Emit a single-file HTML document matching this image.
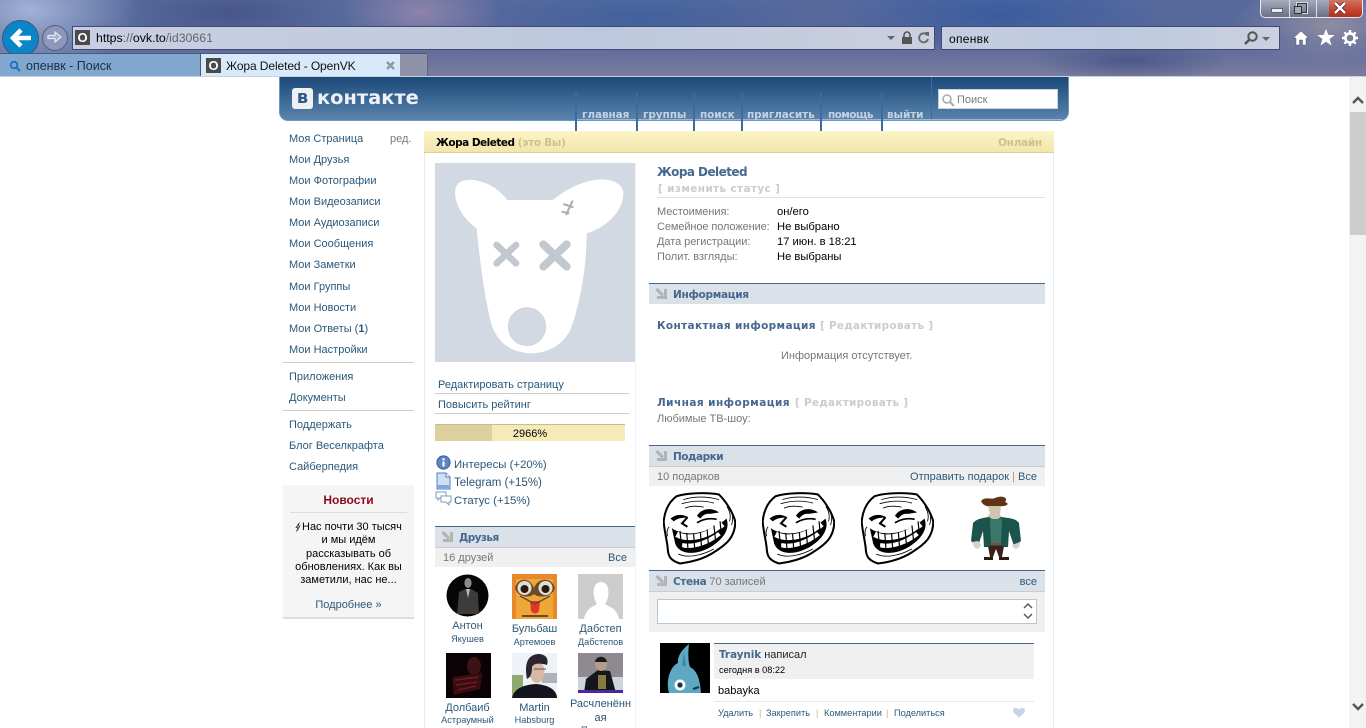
<!DOCTYPE html>
<html><head><meta charset="utf-8"><title>Жора Deleted - OpenVK</title>
<style>
html,body{margin:0;padding:0;width:1366px;height:728px;overflow:hidden;background:#fff}
body{position:relative;font:11px/14px "Liberation Sans",sans-serif;color:#2b587a}
div,span.t,svg{position:absolute}
.t{position:absolute;white-space:nowrap;line-height:14px;margin-top:1px}
.b{font-family:"DejaVu Sans",sans-serif;font-weight:bold;font-size:10.5px;color:#45688e}
.g{color:#777}.k{color:#000}.c{text-align:center}
.gr{font-family:"DejaVu Sans",sans-serif;font-weight:bold;font-size:10.5px;color:#ccc}
.hd{left:649px;width:396px;height:20px;background:#dae1e8;border-top:1px solid #45688e}
.sub{background:#f0f0f0}
.ln{height:1px;background:#ccc}
.sm{font-size:9.2px}
.nm{font-size:11px}
.nv{top:93px;width:2px;height:40px;background:#3d6a9f}
.nt{top:107px;font-family:"DejaVu Sans",sans-serif;font-weight:bold;font-size:10.5px;color:#c3d2e3;letter-spacing:-.1px}
</style></head><body>

<!-- browser chrome -->
<div style="left:0;top:0;width:1366px;height:76px;overflow:hidden;background:#56689a">
 <div style="left:0;top:0;width:1366px;height:76px;background:
  radial-gradient(ellipse 110px 60px at 30px 10px,#a2b2d6 0,rgba(162,178,214,0) 100%),
  radial-gradient(ellipse 110px 30px at 230px 12px,#47568a 0,rgba(71,86,138,0) 100%),
  radial-gradient(ellipse 80px 40px at 420px 12px,#8d84ab 0,rgba(141,132,171,0) 100%),
  radial-gradient(ellipse 160px 30px at 640px 18px,#42619d 0,rgba(66,97,157,0) 100%),
  radial-gradient(ellipse 160px 40px at 1000px 15px,#3b5c9e 0,rgba(59,92,158,0) 100%),
  radial-gradient(ellipse 100px 20px at 1130px 60px,#4b5988 0,rgba(75,89,136,0) 100%),
  radial-gradient(ellipse 100px 40px at 1330px 25px,#8f8ca2 0,rgba(143,140,162,0) 100%),
  linear-gradient(#566a9e 0,#56669a 50%,#7a7c9f 100%)"></div>
</div>
<div style="left:0;top:76px;width:1366px;height:1px;background:#c9cfdc"></div>

<!-- window buttons -->
<div style="left:1260px;top:-2px;width:101px;height:18px;border:1px solid #e8e8ee;border-radius:0 0 5px 5px;overflow:hidden;background:linear-gradient(#a8adbe,#6a7088)">
 <div style="left:68px;top:0;width:33px;height:19px;background:linear-gradient(#d07a6a 0,#c84530 55%,#a83020 100%)"></div>
 <div style="left:28px;top:0;width:1px;height:19px;background:#e0e0e8"></div>
 <div style="left:55px;top:0;width:1px;height:19px;background:#e0e0e8"></div>
</div>
<div style="left:1271px;top:8px;width:10px;height:3px;background:#eee;border:1px solid #666"></div>
<div style="left:1297px;top:3px;width:8px;height:8px;border:1px solid #333;box-shadow:0 0 0 1px #ddd"></div>
<div style="left:1294px;top:6px;width:6px;height:6px;border:1px solid #333;background:#a8adbd"></div>
<svg style="left:1332px;top:2px" width="16" height="12" viewBox="0 0 16 12"><path d="M3 1L13 11M13 1L3 11" stroke="#4a2a2a" stroke-width="4"/><path d="M3 1L13 11M13 1L3 11" stroke="#fff" stroke-width="2.4"/></svg>

<!-- nav buttons -->
<div style="left:2px;top:20px;width:35px;height:35px;border-radius:50%;background:#0a86c8;border:1px solid #3b5578"></div>
<svg style="left:8px;top:25px" width="26" height="26" viewBox="0 0 26 26"><path d="M23 13H5M13 5L5 13L13 21" fill="none" stroke="#fff" stroke-width="4.5"/></svg>
<div style="left:42px;top:25px;width:24px;height:24px;border-radius:50%;background:#8c97bb;border:1px solid #54607f"></div>
<svg style="left:46px;top:29px" width="17" height="16" viewBox="0 0 17 16"><path d="M2 6.5H9V3L15 8L9 13V9.5H2Z" fill="#a6afc9" stroke="#e6e9f2" stroke-width="1.2"/></svg>

<!-- address -->
<div style="left:72px;top:26px;width:861px;height:22px;border:1px solid #3f4c72;background:linear-gradient(90deg,#c9cfe2,#c3cbdf 40%,#bcc8de 60%,#cbcfdf)"></div>
<div style="left:75px;top:30px;width:15px;height:15px;background:#4a4a4a"></div>
<span class="t" style="margin-top:0;left:75px;top:30px;width:15px;text-align:center;font-weight:bold;font-size:13px;line-height:15px;color:#fff">O</span>
<span class="t" style="margin-top:0;left:96px;top:31px;font-size:12.3px;color:#000">https<span style="color:#666">://</span>ovk.to<span style="color:#666">/id30661</span></span>
<div style="left:887px;top:36px;border:4px solid transparent;border-top:4px solid #666;width:0;height:0"></div>
<svg style="left:901px;top:31px" width="12" height="14" viewBox="0 0 12 14"><path d="M3 6V4a3 3 0 0 1 6 0v2" fill="none" stroke="#555" stroke-width="1.6"/><rect x="1" y="6" width="10" height="7" fill="#555"/></svg>
<svg style="left:917px;top:31px" width="13" height="14" viewBox="0 0 13 14"><path d="M10.5 4.5A4.5 4.5 0 1 0 11 8" fill="none" stroke="#666" stroke-width="1.8"/><path d="M8 1H12V5.5Z" fill="#666"/></svg>

<!-- search -->
<div style="left:941px;top:26px;width:337px;height:22px;border:1px solid #3f4c72;background:linear-gradient(90deg,#c6cde0,#bcc9df 50%,#ccd0e0)"></div>
<span class="t" style="margin-top:0;left:949px;top:32px;font-size:12px;letter-spacing:.3px;color:#000">опенвк</span>
<svg style="left:1243px;top:30px" width="16" height="16" viewBox="0 0 16 16"><circle cx="9.5" cy="6.5" r="4.2" fill="none" stroke="#555" stroke-width="2"/><path d="M6 10L2 14" stroke="#555" stroke-width="2.6"/></svg>
<div style="left:1262px;top:37px;border:4px solid transparent;border-top:4px solid #666;width:0;height:0"></div>

<!-- right icons -->
<svg style="left:1293px;top:30px" width="16" height="16" viewBox="0 0 16 16"><path d="M8 1L15.5 8H13V15H9.5V10H6.5V15H3V8H.5Z" fill="#fff" stroke="#444" stroke-width=".4"/></svg>
<svg style="left:1317px;top:29px" width="18" height="17" viewBox="0 0 18 17"><path d="M9 0L11.4 6H17.6L12.6 10L14.5 16.5L9 12.8L3.5 16.5L5.4 10L.4 6H6.6Z" fill="#fff"/></svg>
<svg style="left:1342px;top:30px" width="16" height="16" viewBox="0 0 16 16"><circle cx="8" cy="8" r="4.6" fill="none" stroke="#fff" stroke-width="2.6"/><path d="M8 0V3M8 13V16M0 8H3M13 8H16M2.3 2.3L4.5 4.5M11.5 11.5L13.7 13.7M13.7 2.3L11.5 4.5M4.5 11.5L2.3 13.7" stroke="#fff" stroke-width="2.4"/></svg>

<!-- tabs -->
<div style="left:0;top:53px;width:427px;height:1px;background:#4a5a7c"></div>
<div style="left:0;top:54px;width:200px;height:22px;background:#82a7ce"></div>
<div style="left:200px;top:54px;width:1px;height:22px;background:#46597a"></div>
<div style="left:201px;top:54px;width:199px;height:22px;background:#d8e9f9"></div>
<div style="left:400px;top:54px;width:27px;height:22px;background:#8f93a8;border-right:1px solid #5a6480"></div>
<svg style="left:9px;top:60px" width="12" height="12" viewBox="0 0 12 12"><circle cx="5" cy="5" r="3.3" fill="none" stroke="#1a6fc0" stroke-width="1.8"/><path d="M7.5 7.5L11 11" stroke="#1a6fc0" stroke-width="2"/></svg>
<span class="t" style="left:26px;top:58px;font-size:12.5px;color:#1c2e48">опенвк - Поиск</span>
<div style="left:206px;top:58px;width:15px;height:15px;background:#4a4a4a"></div>
<span class="t" style="margin-top:0;left:206px;top:58px;width:15px;text-align:center;font-weight:bold;font-size:13px;line-height:15px;color:#fff">O</span>
<span class="t" style="left:226px;top:58px;font-size:12px;letter-spacing:-.1px;color:#111">Жора Deleted - OpenVK</span>
<svg style="left:385px;top:60px" width="11" height="11" viewBox="0 0 11 11"><path d="M2 2L9 9M9 2L2 9" stroke="#8d98a8" stroke-width="2.4"/></svg>

<!-- vk header -->
<div style="left:279px;top:77px;width:790px;height:44px;box-sizing:border-box;border:1px solid #6f94ba;border-top:0;border-radius:0 0 9px 9px;background:linear-gradient(#1a4878,#5a84ad)"></div>
<div style="left:292px;top:88px;width:21px;height:21px;border-radius:3px;background:#eef0f2"></div>
<span class="t" style="margin-top:0;left:292px;top:88px;width:21px;text-align:center;font:bold 18px/20px 'DejaVu Sans',sans-serif;color:#2f5b8a">в</span>
<span class="t" style="margin-top:0;left:317px;top:87px;font:bold 19.4px/22px 'DejaVu Sans',sans-serif;color:#eef2f6">контакте</span>
<div style="left:576px;top:119px;width:486px;height:1px;background:#9fb6cf"></div>
<div class="nv" style="left:575px"></div><div class="nv" style="left:636px"></div><div class="nv" style="left:693px"></div><div class="nv" style="left:741px"></div><div class="nv" style="left:820px"></div><div class="nv" style="left:881px"></div>
<div style="left:931px;top:77px;width:1px;height:42px;background:#3f6a98"></div>
<span class="t nt" style="left:582px">главная</span>
<span class="t nt" style="left:643px">группы</span>
<span class="t nt" style="left:700px">поиск</span>
<span class="t nt" style="left:747px">пригласить</span>
<span class="t nt" style="left:828px;letter-spacing:-.6px">помощь</span>
<span class="t nt" style="left:887px">выйти</span>
<div style="left:938px;top:89px;width:120px;height:20px;background:#fff;border:0;box-shadow:inset 0 0 0 1px #c4d2e0"></div>
<svg style="left:941px;top:93px" width="14" height="14" viewBox="0 0 14 14"><circle cx="6" cy="6" r="4" fill="none" stroke="#aaa" stroke-width="1.6"/><path d="M9 9L13 13" stroke="#aaa" stroke-width="2"/></svg>
<span class="t g" style="left:957px;top:92px">Поиск</span>

<!-- sidebar -->
<span class="t" style="left:289px;top:131px">Моя Страница</span><span class="t g" style="left:390px;top:131px">ред.</span>
<span class="t" style="left:289px;top:152px">Мои Друзья</span>
<span class="t" style="left:289px;top:173px">Мои Фотографии</span>
<span class="t" style="left:289px;top:194px">Мои Видеозаписи</span>
<span class="t" style="left:289px;top:215px">Мои Аудиозаписи</span>
<span class="t" style="left:289px;top:236px">Мои Сообщения</span>
<span class="t" style="left:289px;top:257px">Мои Заметки</span>
<span class="t" style="left:289px;top:279px">Мои Группы</span>
<span class="t" style="left:289px;top:300px">Мои Новости</span>
<span class="t" style="left:289px;top:321px">Мои Ответы (<b>1</b>)</span>
<span class="t" style="left:289px;top:342px">Мои Настройки</span>
<div class="ln" style="left:283px;top:362px;width:131px"></div>
<span class="t" style="left:289px;top:369px">Приложения</span>
<span class="t" style="left:289px;top:390px">Документы</span>
<div class="ln" style="left:283px;top:410px;width:131px"></div>
<span class="t" style="left:289px;top:417px">Поддержать</span>
<span class="t" style="left:289px;top:438px">Блог Веселкрафта</span>
<span class="t" style="left:289px;top:459px">Сайберпедия</span>

<div style="left:283px;top:485px;width:131px;height:134px;box-sizing:border-box;background:#f5f5f5;border-bottom:2px solid #ddd"></div>
<span class="t c" style="left:283px;width:131px;top:492px;font-weight:bold;font-size:12px;color:#8b0a1a">Новости</span>
<div class="ln" style="left:290px;top:512px;width:117px;background:#ddd"></div>
<svg style="left:295px;top:522px" width="6" height="10" viewBox="0 0 6 10"><path d="M4.5 .5L1 5.5H3L1.5 9.5L5 4H3Z" fill="none" stroke="#333" stroke-width=".7"/></svg>
<span class="t k" style="left:302px;top:519px">Нас почти 30 тысяч</span>
<span class="t c k" style="left:283px;width:131px;top:532px">и мы идём</span>
<span class="t c k" style="left:283px;width:131px;top:546px">рассказывать об</span>
<span class="t c k" style="left:283px;width:131px;top:559px">обновлениях. Как вы</span>
<span class="t c k" style="left:283px;width:131px;top:572px">заметили, нас не...</span>
<span class="t c" style="left:283px;width:131px;top:597px">Подробнее »</span>

<!-- content frame -->
<div style="left:424px;top:153px;width:1px;height:575px;background:#e6ebf1"></div>
<div style="left:1053px;top:153px;width:1px;height:575px;background:#e6ebf1"></div>
<div style="left:635px;top:163px;width:1px;height:565px;background:#eef1f5"></div>
<div style="left:424px;top:131px;width:630px;height:22px;box-sizing:border-box;background:linear-gradient(#fcf4c8,#f3e6ac);border-bottom:1px solid #dccf96"></div>
<span class="t" style="left:436px;top:135px;font:bold 10.5px/14px 'DejaVu Sans',sans-serif;color:#000;letter-spacing:-.5px">Жора Deleted <span style="color:#cfc28c;letter-spacing:-.3px">(это Вы)</span></span>
<span class="t" style="left:998px;top:135px;font:bold 10.5px/14px 'DejaVu Sans',sans-serif;color:#cfc28c;letter-spacing:-.3px">Онлайн</span>

<!-- avatar -->
<div style="left:435px;top:163px;width:200px;height:199px;background:#d2d9e2"></div>
<svg style="left:430px;top:130px" width="220" height="240" viewBox="0 0 660 720">
 <path d="M75 185C78 155 100 148 130 150C170 155 205 175 232 210H368C400 185 450 152 510 148C555 148 582 165 580 195C578 240 535 290 470 310C470 400 455 500 425 590C405 640 360 670 300 670C240 665 205 640 185 585C165 510 150 400 140 295C105 270 75 230 75 185Z" fill="#fff"/>
 <ellipse cx="291" cy="590" rx="56" ry="57" fill="#d2d9e2" stroke="#c6ccd4" stroke-width="2"/>
 <path d="M200 345L258 400M258 345L200 400" stroke="#c2c8d0" stroke-width="20" stroke-linecap="round"/>
 <path d="M340 343L410 410M410 343L340 410" stroke="#c2c8d0" stroke-width="24" stroke-linecap="round"/>
 <path d="M428 212L408 255M400 222L430 232M395 245L418 250" stroke="#a8acb2" stroke-width="6" fill="none"/>
</svg>

<span class="t" style="left:438px;top:377px">Редактировать страницу</span>
<div class="ln" style="left:435px;top:393px;width:194px"></div>
<span class="t" style="left:438px;top:397px">Повысить рейтинг</span>
<div class="ln" style="left:435px;top:413px;width:194px"></div>
<div style="left:435px;top:424px;width:190px;height:17px;background:#f6eab9"></div>
<div style="left:435px;top:424px;width:57px;height:17px;background:#ddd09c"></div>
<div style="left:435px;top:424px;width:190px;height:1px;background:#c9bd8a"></div>
<span class="t c k" style="left:435px;width:190px;top:426px">2966%</span>

<svg style="left:436px;top:455px" width="15" height="15" viewBox="0 0 15 15"><circle cx="7.5" cy="7.5" r="6.6" fill="#5f86bd" stroke="#2f5d9a"/><rect x="6.4" y="6.5" width="2.2" height="5" fill="#fff"/><rect x="6.4" y="3.3" width="2.2" height="2" fill="#fff"/></svg>
<span class="t" style="left:454px;top:457px;font-size:11.4px">Интересы (+20%)</span>
<svg style="left:436px;top:472px" width="15" height="18" viewBox="0 0 15 18"><path d="M1 1H10L14 5V17H1Z" fill="#cfe0f5" stroke="#4b7fbc"/><path d="M10 1V5H14" fill="#fff" stroke="#4b7fbc"/><rect x="2" y="13" width="11" height="3" fill="#7ba8de"/></svg>
<span class="t" style="left:454px;top:475px;font-size:11.5px">Telegram (+15%)</span>
<svg style="left:435px;top:491px" width="17" height="16" viewBox="0 0 17 16"><path d="M1 1H11V7H5L3 9V7H1Z" fill="#fff" stroke="#7d9cc4"/><path d="M6 5H16V11H14V14L11 11H6Z" fill="#fff" stroke="#7d9cc4"/></svg>
<span class="t" style="left:454px;top:493px;font-size:11.4px">Статус (+15%)</span>

<svg width="0" height="0" style="left:0;top:0"><defs>
<symbol id="ar" viewBox="0 0 13 12"><path d="M1.5 1L8 7.5" stroke="#b4b4b4" stroke-width="3.2"/><path d="M12 1V11H2V8H9V1Z" fill="#b4b4b4"/></symbol>
<symbol id="troll" viewBox="0 0 215 210">
 <path d="M40 10C70 0 130 -2 165 5C185 25 205 55 213 85C212 130 190 150 150 175C120 195 80 205 50 208C25 200 15 190 14 165C12 140 5 120 2 85C5 50 20 25 40 10Z" fill="#fff" stroke="#000" stroke-width="6"/>
 <path d="M26 104C60 130 130 125 187 76C198 105 180 135 140 160C100 183 50 185 36 150Z" fill="#000"/>
 <path d="M40 122C75 140 130 130 176 92" fill="none" stroke="#fff" stroke-width="17"/>
 <path d="M56 154C90 162 135 145 166 120" fill="none" stroke="#fff" stroke-width="13"/>
 <path d="M50 112L56 170M70 118L74 172M90 120L94 172M110 116L114 166M130 108L134 156M150 96L155 142M168 84L172 124" stroke="#000" stroke-width="3.5"/>
 <path d="M40 141C80 152 130 140 172 106" fill="none" stroke="#000" stroke-width="4"/>
 <path d="M22 76C35 64 55 60 75 72C65 74 45 72 32 84Z" fill="#000"/>
 <path d="M72 72L56 90L72 100" fill="none" stroke="#000" stroke-width="6"/>
 <path d="M100 68C112 45 145 42 165 58L138 62C125 60 115 68 110 76Z" fill="#000"/>
 <path d="M100 88C120 76 140 74 158 78" fill="none" stroke="#000" stroke-width="5"/>
 <path d="M18 100C12 108 10 118 14 128M196 45C206 60 208 75 202 95M188 40C198 55 200 70 196 84M60 20C90 10 130 10 165 20M55 32C90 22 120 22 150 30M65 45C80 38 100 38 120 42" fill="none" stroke="#000" stroke-width="2.5"/>
 <path d="M45 180C70 192 110 187 150 165" fill="none" stroke="#000" stroke-width="2.5"/>
</symbol></defs></svg>

<!-- friends -->
<div style="left:435px;top:526px;width:200px;height:20px;background:#dae1e8;border-top:1px solid #45688e"></div>
<svg style="left:441px;top:531px" width="13" height="12"><use href="#ar" width="13" height="12"/></svg>
<span class="t b" style="left:459px;top:530px;letter-spacing:-.6px">Друзья</span>
<div class="sub" style="left:435px;top:547px;width:200px;height:20px;border-top:1px solid #ccc;box-sizing:border-box"></div>
<span class="t g" style="left:443px;top:550px">16 друзей</span>
<span class="t" style="right:739px;top:550px">Все</span>

<svg style="left:446px;top:574px" width="43" height="43" viewBox="0 0 43 43"><circle cx="21.5" cy="21.5" r="21" fill="#060606"/><path d="M11 40L13 18L19 15L25 15L32 19L33 40Z" fill="#3c3c3c"/><ellipse cx="22" cy="9" rx="3.6" ry="5" fill="#8a8a8a"/><path d="M20 15L22 24L24 15Z" fill="#bbb"/></svg>
<svg style="left:512px;top:574px" width="45" height="45" viewBox="0 0 45 45"><rect width="45" height="45" fill="#eea838"/><path d="M0 0H45V5H0ZM0 0H4V45H0ZM41 0H45V45H41Z" fill="#e88a2c"/><path d="M3 14C6 3 18 3 22 14C26 3 40 3 43 14C40 24 26 24 22 20C18 24 6 24 3 14Z" fill="#6a4a2a"/><circle cx="12.5" cy="14" r="7" fill="#e0e0d0"/><circle cx="33.5" cy="14" r="7" fill="#e0e0d0"/><circle cx="12.5" cy="15" r="4" fill="#2a1a10"/><circle cx="33.5" cy="15" r="4" fill="#2a1a10"/><path d="M18 27H28L27 37Q23 42 19 37Z" fill="#e0352a"/><path d="M8 22L23 30L38 22" stroke="#6a4a2a" stroke-width="1.5" fill="none"/><rect x="10" y="41" width="26" height="2" fill="#6a4a2a"/></svg>
<svg style="left:578px;top:574px" width="45" height="45" viewBox="0 0 45 45"><rect width="45" height="45" fill="#cdcdcd"/><path d="M6 45C8 34 15 33 19 30C16 26 15 20 16 14C18 6 28 6 30 14C31 20 30 26 27 30C31 33 39 34 41 45Z" fill="#fff"/></svg>
<span class="t c nm" style="left:434px;width:67px;top:618px">Антон</span>
<span class="t c sm" style="left:434px;width:67px;top:631px">Якушев</span>
<span class="t c nm" style="left:501px;width:67px;top:621px">Бульбаш</span>
<span class="t c sm" style="left:501px;width:67px;top:634px">Артемоев</span>
<span class="t c nm" style="left:567px;width:67px;top:621px">Дабстеп</span>
<span class="t c sm" style="left:567px;width:67px;top:634px">Дабстепов</span>

<svg style="left:446px;top:653px" width="45" height="45" viewBox="0 0 45 45"><rect width="45" height="45" fill="#0a0204"/><ellipse cx="28" cy="13" rx="7" ry="9" fill="#3e1215"/><path d="M6 24L36 20L34 36L8 42Z" fill="#3a0c10"/><path d="M9 27L32 24M10 32L31 29M12 37L30 33" stroke="#6a2025" stroke-width="1.4"/></svg>
<svg style="left:512px;top:653px" width="45" height="45" viewBox="0 0 45 45"><rect width="45" height="45" fill="#eef2f6"/><path d="M0 22H11V45H0Z" fill="#8fa870"/><path d="M30 20H45V30H30Z" fill="#b0b0b8"/><path d="M0 45C2 36 10 32 24 31C38 32 45 38 45 45Z" fill="#141420"/><ellipse cx="25" cy="19" rx="7.5" ry="11" fill="#d8b8a4"/><path d="M15 26C12 10 16 2 26 1C34 1 37 6 35 12C28 10 22 10 20 14C20 20 19 24 15 26Z" fill="#2a2430"/><path d="M22 16H34" stroke="#555" stroke-width="1"/></svg>
<svg style="left:578px;top:653px" width="45" height="40" viewBox="0 0 45 40"><rect width="45" height="40" fill="#8e8a90"/><rect y="24" width="45" height="16" fill="#d0d4de"/><path d="M6 40L8 26L20 17L32 18L38 40Z" fill="#14161e"/><ellipse cx="23" cy="11" rx="6" ry="7" fill="#b89a88"/><path d="M17 9C18 2 28 2 29 9Z" fill="#1a1a22"/><rect x="20" y="22" width="8" height="14" fill="#8a7a40"/><rect y="37" width="45" height="3" fill="#4a2a9a"/></svg>
<span class="t c nm" style="left:434px;width:67px;top:700px">Долбаиб</span>
<span class="t c sm" style="left:434px;width:67px;top:712px">Астраумный</span>
<span class="t c nm" style="left:501px;width:67px;top:700px">Martin</span>
<span class="t c sm" style="left:501px;width:67px;top:712px">Habsburg</span>
<span class="t c nm" style="left:567px;width:67px;top:696px">Расчленённ</span>
<span class="t c nm" style="left:567px;width:67px;top:710px">ая</span>
<span class="t c sm" style="left:567px;width:67px;top:722px">Пугачева</span>

<!-- right column -->
<span class="t" style="left:657px;top:164px;font:bold 12px/14px 'DejaVu Sans',sans-serif;color:#45688e;letter-spacing:-.55px">Жора Deleted</span>
<span class="t gr" style="left:658px;top:181px;letter-spacing:.35px">[ изменить статус ]</span>
<div style="left:657px;top:197px;width:388px;height:1px;background:#dde3ea"></div>
<span class="t g" style="left:657px;top:204px;letter-spacing:-.05px">Местоимения:</span><span class="t k" style="left:777px;top:204px;font-size:11.2px">он/его</span>
<span class="t g" style="left:657px;top:219px;letter-spacing:-.1px">Семейное положение:</span><span class="t k" style="left:777px;top:219px;font-size:11.2px">Не выбрано</span>
<span class="t g" style="left:657px;top:234px;letter-spacing:-.05px">Дата регистрации:</span><span class="t k" style="left:777px;top:234px;font-size:11.2px">17 июн. в 18:21</span>
<span class="t g" style="left:657px;top:249px">Полит. взгляды:</span><span class="t k" style="left:777px;top:249px;font-size:11.2px">Не выбраны</span>

<div class="hd" style="top:283px"></div>
<svg style="left:655px;top:288px" width="13" height="12"><use href="#ar" width="13" height="12"/></svg>
<span class="t b" style="left:673px;top:287px;letter-spacing:-.3px">Информация</span>

<span class="t b" style="left:657px;top:318px;letter-spacing:.35px">Контактная информация</span>
<span class="t gr" style="left:820px;top:318px;letter-spacing:.25px">[ Редактировать ]</span>
<span class="t g" style="left:781px;top:348px">Информация отсутствует.</span>
<span class="t b" style="left:657px;top:395px;letter-spacing:.45px">Личная информация</span>
<span class="t gr" style="left:795px;top:395px;letter-spacing:.25px">[ Редактировать ]</span>
<span class="t g" style="left:657px;top:411px">Любимые ТВ-шоу:</span>

<!-- gifts -->
<div class="hd" style="top:445px"></div>
<svg style="left:655px;top:450px" width="13" height="12"><use href="#ar" width="13" height="12"/></svg>
<span class="t b" style="left:673px;top:449px;letter-spacing:-.5px">Подарки</span>
<div class="sub" style="left:649px;top:466px;width:396px;height:20px;border-top:1px solid #ccc;box-sizing:border-box"></div>
<span class="t g" style="left:657px;top:469px">10 подарков</span>
<span class="t" style="right:329px;top:469px">Отправить подарок <span style="color:#c89050">|</span> Все</span>

<svg style="left:663px;top:492px" width="73" height="73"><use href="#troll" width="73" height="73"/></svg>
<svg style="left:762px;top:492px" width="73" height="73"><use href="#troll" width="73" height="73"/></svg>
<svg style="left:861px;top:492px" width="73" height="73"><use href="#troll" width="73" height="73"/></svg>
<svg style="left:971px;top:495px" width="50" height="66" viewBox="0 0 50 66">
 <path d="M10 6C14 1 20 5 24 3C30 0 38 2 34 7C40 9 35 12 26 11C18 13 12 11 10 6Z" fill="#5e3418"/>
 <path d="M17 11H30L29 20L33 24H14L19 19Z" fill="#cfc5ae"/>
 <path d="M2 28C6 23 14 23 18 22L24 26L30 22C36 23 45 23 48 28L50 46L43 51L38 36L37 52H13L12 36L7 51L0 46Z" fill="#1a544a"/>
 <path d="M19 24H31L30 48H20Z" fill="#3a786c"/>
 <path d="M1 47C3 55 8 56 10 50L7 46ZM41 50C43 56 49 55 49 47Z" fill="#d6d6c8"/>
 <path d="M17 51H33L31 62H28L25 54L22 62H19Z" fill="#3a2018"/>
 <path d="M13 62H22V65H13ZM28 62H38V65H28Z" fill="#2e1a14"/>
 <rect x="20" y="48" width="10" height="2" fill="#a04030"/>
</svg>

<!-- wall -->
<div class="hd" style="top:570px"></div>
<svg style="left:655px;top:575px" width="13" height="12"><use href="#ar" width="13" height="12"/></svg>
<span class="t" style="left:673px;top:574px"><span class="b" style="letter-spacing:-.4px">Стена</span> <span class="g">70 записей</span></span>
<span class="t" style="right:329px;top:574px">все</span>
<div class="sub" style="left:649px;top:591px;width:396px;height:41px;border-top:1px solid #ccc;box-sizing:border-box"></div>
<div style="left:657px;top:599px;width:378px;height:23px;background:#fff;border:1px solid #b9c6d4"></div>
<svg style="left:1022px;top:602px" width="12" height="18" viewBox="0 0 12 18"><path d="M2 6L6 2L10 6M2 12L6 16L10 12" fill="none" stroke="#555" stroke-width="1.4"/></svg>

<svg style="left:660px;top:643px" width="50" height="50" viewBox="0 0 50 50"><rect width="50" height="50" fill="#000"/><path d="M9 50C5 35 12 22 18 20C17 12 24 5 29 1C28 10 28 18 30 24C38 28 40 38 41 50Z" fill="#5fa8c4"/><path d="M22 22L24 9L26 24Z" fill="#3f86a2"/><circle cx="20" cy="42" r="5.5" fill="#fff"/><circle cx="20" cy="42" r="2.6" fill="#15354a"/><path d="M33 46L39 44" stroke="#15354a" stroke-width="2"/></svg>
<div style="left:714px;top:643px;width:320px;height:35px;background:#f0f0f0;border-top:1px solid #45688e"></div>
<span class="t" style="left:719px;top:647px"><span class="b" style="letter-spacing:-.1px">Traynik</span> <span style="color:#222">написал</span></span>
<span class="t sm k" style="left:719px;top:662px">сегодня в 08:22</span>
<span class="t k" style="left:718px;top:683px">babayka</span>
<div style="left:714px;top:701px;width:320px;height:1px;background:#e8e8e8"></div>
<span class="t sm" style="left:718px;top:705px">Удалить</span>
<span class="t sm" style="left:759px;top:705px;color:#c8b080">|</span>
<span class="t sm" style="left:766px;top:705px">Закрепить</span>
<span class="t sm" style="left:816px;top:705px;color:#c8b080">|</span>
<span class="t sm" style="left:824px;top:705px">Комментарии</span>
<span class="t sm" style="left:886px;top:705px;color:#c8b080">|</span>
<span class="t sm" style="left:894px;top:705px">Поделиться</span>
<svg style="left:1013px;top:707px" width="12" height="11" viewBox="0 0 12 11"><path d="M6 10.5C2 7 0 5.5 0 3.2C0 1 2.8 -.3 6 2.5C9.2 -.3 12 1 12 3.2C12 5.5 10 7 6 10.5Z" fill="#c7d4e3"/></svg>

<!-- scrollbar -->
<div style="left:1349px;top:77px;width:17px;height:651px;background:#f3f3f3"></div>
<div style="left:1350px;top:112px;width:16px;height:123px;background:#cdcdcd"></div>
<svg style="left:1351px;top:95px" width="14" height="10" viewBox="0 0 14 10"><path d="M2 8L7 3L12 8" fill="none" stroke="#555" stroke-width="2.4"/></svg>
<svg style="left:1351px;top:702px" width="14" height="10" viewBox="0 0 14 10"><path d="M2 2L7 7L12 2" fill="none" stroke="#555" stroke-width="2.4"/></svg>
</body></html>
